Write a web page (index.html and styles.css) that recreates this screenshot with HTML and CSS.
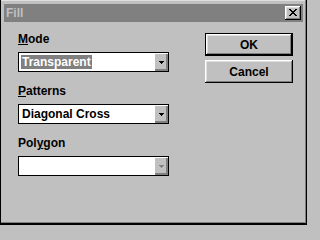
FILE: index.html
```html
<!DOCTYPE html>
<html>
<head>
<meta charset="utf-8">
<title>Fill</title>
<link rel="stylesheet" href="styles.css">
</head>
<body>
<div class="window">
  <div class="titlebar">
    <span class="title">Fill</span>
    <button class="close" aria-label="Close">
      <svg width="8" height="7" viewBox="0 0 8 7" shape-rendering="crispEdges"><path d="M0 0h2v1H0zM6 0h2v1H6zM1 1h2v1H1zM5 1h2v1H5zM2 2h4v1H2zM3 3h2v1H3zM2 4h4v1H2zM1 5h2v1H1zM5 5h2v1H5zM0 6h2v1H0zM6 6h2v1H6z" fill="#000"/></svg>
    </button>
  </div>
  <div class="content">
    <div class="fields">
      <div class="group">
        <div class="label"><u>M</u>ode</div>
        <div class="combo">
          <div class="value"><span class="selected">Transparent</span></div>
          <div class="drop"><svg width="5" height="3" viewBox="0 0 5 3" shape-rendering="crispEdges"><path d="M0 0h5v1H0zM1 1h3v1H1zM2 2h1v1H2z" fill="#000"/></svg></div>
        </div>
      </div>
      <div class="group">
        <div class="label"><u>P</u>atterns</div>
        <div class="combo">
          <div class="value"><span class="plain">Diagonal Cross</span></div>
          <div class="drop"><svg width="5" height="3" viewBox="0 0 5 3" shape-rendering="crispEdges"><path d="M0 0h5v1H0zM1 1h3v1H1zM2 2h1v1H2z" fill="#000"/></svg></div>
        </div>
      </div>
      <div class="group">
        <div class="label">Pol<u>y</u>gon</div>
        <div class="combo">
          <div class="value"></div>
          <div class="drop"><svg width="5" height="3" viewBox="0 0 5 3" shape-rendering="crispEdges"><path d="M0 0h5v1H0zM1 1h3v1H1zM2 2h1v1H2z" fill="#808080"/></svg></div>
        </div>
      </div>
    </div>
    <div class="buttons">
      <button class="btn default">OK</button>
      <button class="btn">Cancel</button>
    </div>
  </div>
</div>
</body>
</html>
```
FILE: styles.css
```css
html, body {
  margin: 0;
  padding: 0;
  background: #c0c0c0;
}
body {
  font-family: "Liberation Sans", Arial, sans-serif;
  font-weight: bold;
  font-size: 12px;
  color: #000;
}
.window {
  width: 307px;
  height: 225px;
  box-sizing: border-box;
  background: #c0c0c0;
  padding: 4px 4px 0 4px;
  box-shadow: inset 1px 0 #000, inset -1px -2px #000, inset -2px -3px #808080, inset 0 1px #dfdfdf;
}
.titlebar {
  height: 18px;
  background: #808080;
  display: flex;
  align-items: center;
  justify-content: space-between;
}
.title {
  color: #c0c0c0;
  padding-left: 2px;
  line-height: 18px;
}
.close {
  width: 16px;
  height: 14px;
  margin: 0 2px 0 0;
  padding: 0;
  border: 0;
  background: #c0c0c0;
  display: flex;
  align-items: center;
  justify-content: center;
  box-shadow: inset -1px -1px #000, inset 1px 1px #fff, inset -2px -2px #808080, inset 2px 2px #dfdfdf;
}
.close svg {
  display: block;
  margin: 0 1px 1px 0;
}
.content {
  display: flex;
  align-items: flex-start;
  padding-left: 14px;
  gap: 36px;
}
.fields {
  width: 151px;
  padding-top: 9px;
  display: flex;
  flex-direction: column;
  gap: 11px;
}
.label {
  line-height: 16px;
  margin-bottom: 5px;
}
.combo {
  height: 20px;
  box-sizing: border-box;
  border: 1px solid #000;
  background: #fff;
  display: flex;
}
.value {
  flex: 1;
  display: flex;
  align-items: center;
  padding-left: 2px;
}
.selected, .plain {
  display: inline-block;
  line-height: 14px;
  padding: 0 1px;
}
.selected {
  background: #808080;
  color: #fff;
}
.drop {
  width: 14px;
  background: #c0c0c0;
  display: flex;
  align-items: center;
  justify-content: center;
  box-shadow: inset 1px 1px #fff, inset -1px -1px #808080, inset -2px -2px #808080;
}
.drop svg {
  display: block;
}
.buttons {
  width: 88px;
  padding-top: 11px;
  display: flex;
  flex-direction: column;
  gap: 4px;
}
.btn {
  height: 23px;
  width: 88px;
  box-sizing: border-box;
  padding: 0;
  margin: 0;
  border: 0;
  background: #c0c0c0;
  font-family: "Liberation Sans", Arial, sans-serif;
  font-weight: bold;
  font-size: 12px;
  color: #000;
  box-shadow: inset -1px -1px #000, inset 1px 1px #fff, inset -2px -2px #808080, inset 2px 2px #dfdfdf;
}
.btn.default {
  border: 1px solid #000;
}
```
